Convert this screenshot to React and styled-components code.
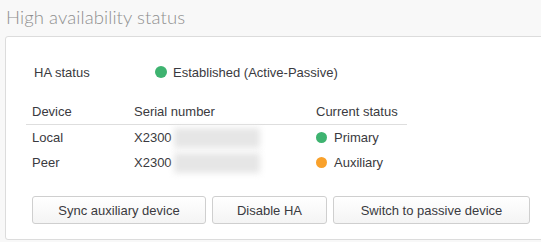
import styled, { createGlobalStyle } from "styled-components";

const GlobalStyle = createGlobalStyle`
  body {
    margin: 0;
    background: #f8f8f8;
    font-family: "Liberation Sans", Arial, sans-serif;
    color: #3a3a40;
    overflow: hidden;
  }
`;

const Page = styled.div`
  display: flex;
  flex-direction: column;
  width: 541px;
  height: 242px;
`;

const Title = styled.h1`
  margin: 0;
  height: 36px;
  line-height: 34px;
  padding-left: 6px;
  font-family: Lato, sans-serif;
  font-size: 18.5px;
  font-weight: 300;
  color: #8f8f8f;
  letter-spacing: 0.1px;
`;

const Card = styled.div`
  margin-left: 5px;
  width: 560px;
  height: 204px;
  box-sizing: border-box;
  background: #fff;
  border: 1px solid #dcdcdc;
  border-radius: 3px;
  padding: 25px 0 0 20px;
  font-size: 13px;
`;

const StatusRow = styled.div`
  display: flex;
  align-items: center;
  height: 20px;
  padding-left: 8px;
`;

const Label = styled.div`
  width: 121px;
`;

const Dot = styled.span`
  display: inline-block;
  width: ${(p) => p.size || 11}px;
  height: ${(p) => p.size || 11}px;
  border-radius: 50%;
  background: ${(p) => (p.color === "orange" ? "#f9a12b" : "#3eb370")};
  margin-right: ${(p) => p.gap || 7}px;
  flex-shrink: 0;
`;

const Table = styled.div`
  width: 381px;
  margin-top: 17px;
`;

const Row = styled.div`
  display: grid;
  grid-template-columns: 102px 182px 1fr;
  align-items: center;
  height: ${(p) => (p.head ? 26 : 25)}px;
  padding-left: 6px;
  border-bottom: ${(p) => (p.head ? "1px solid #dedede" : "none")};
  box-sizing: border-box;
`;

const Cell = styled.div`
  display: flex;
  align-items: center;
`;

const Blur = styled.span`
  display: inline-block;
  width: 86px;
  height: 20px;
  margin-left: 2px;
  background: #e6e6e6;
  filter: blur(3px);
`;

const Buttons = styled.div`
  display: flex;
  gap: 6px;
  margin-top: 21px;
  padding-left: 6px;
`;

const Button = styled.button`
  width: ${(p) => p.w}px;
  height: 28px;
  border: 1px solid #cfcfcf;
  border-radius: 3px;
  background: linear-gradient(#ffffff, #f4f4f4);
  font-family: inherit;
  font-size: 13px;
  color: #3a3a40;
  padding: 0;
`;

const devices = [
  { name: "Local", status: "Primary", color: "green" },
  { name: "Peer", status: "Auxiliary", color: "orange" },
];

export default function App() {
  return (
    <Page>
      <GlobalStyle />
      <Title>High availability status</Title>
      <Card>
        <StatusRow>
          <Label>HA status</Label>
          <Dot size={12} gap={6} />
          Established (Active-Passive)
        </StatusRow>
        <Table>
          <Row head>
            <Cell>Device</Cell>
            <Cell>Serial number</Cell>
            <Cell>Current status</Cell>
          </Row>
          {devices.map((d) => (
            <Row key={d.name}>
              <Cell>{d.name}</Cell>
              <Cell>
                X2300
                <Blur />
              </Cell>
              <Cell>
                <Dot color={d.color} />
                {d.status}
              </Cell>
            </Row>
          ))}
        </Table>
        <Buttons>
          <Button w={174}>Sync auxiliary device</Button>
          <Button w={115}>Disable HA</Button>
          <Button w={197}>Switch to passive device</Button>
        </Buttons>
      </Card>
    </Page>
  );
}
